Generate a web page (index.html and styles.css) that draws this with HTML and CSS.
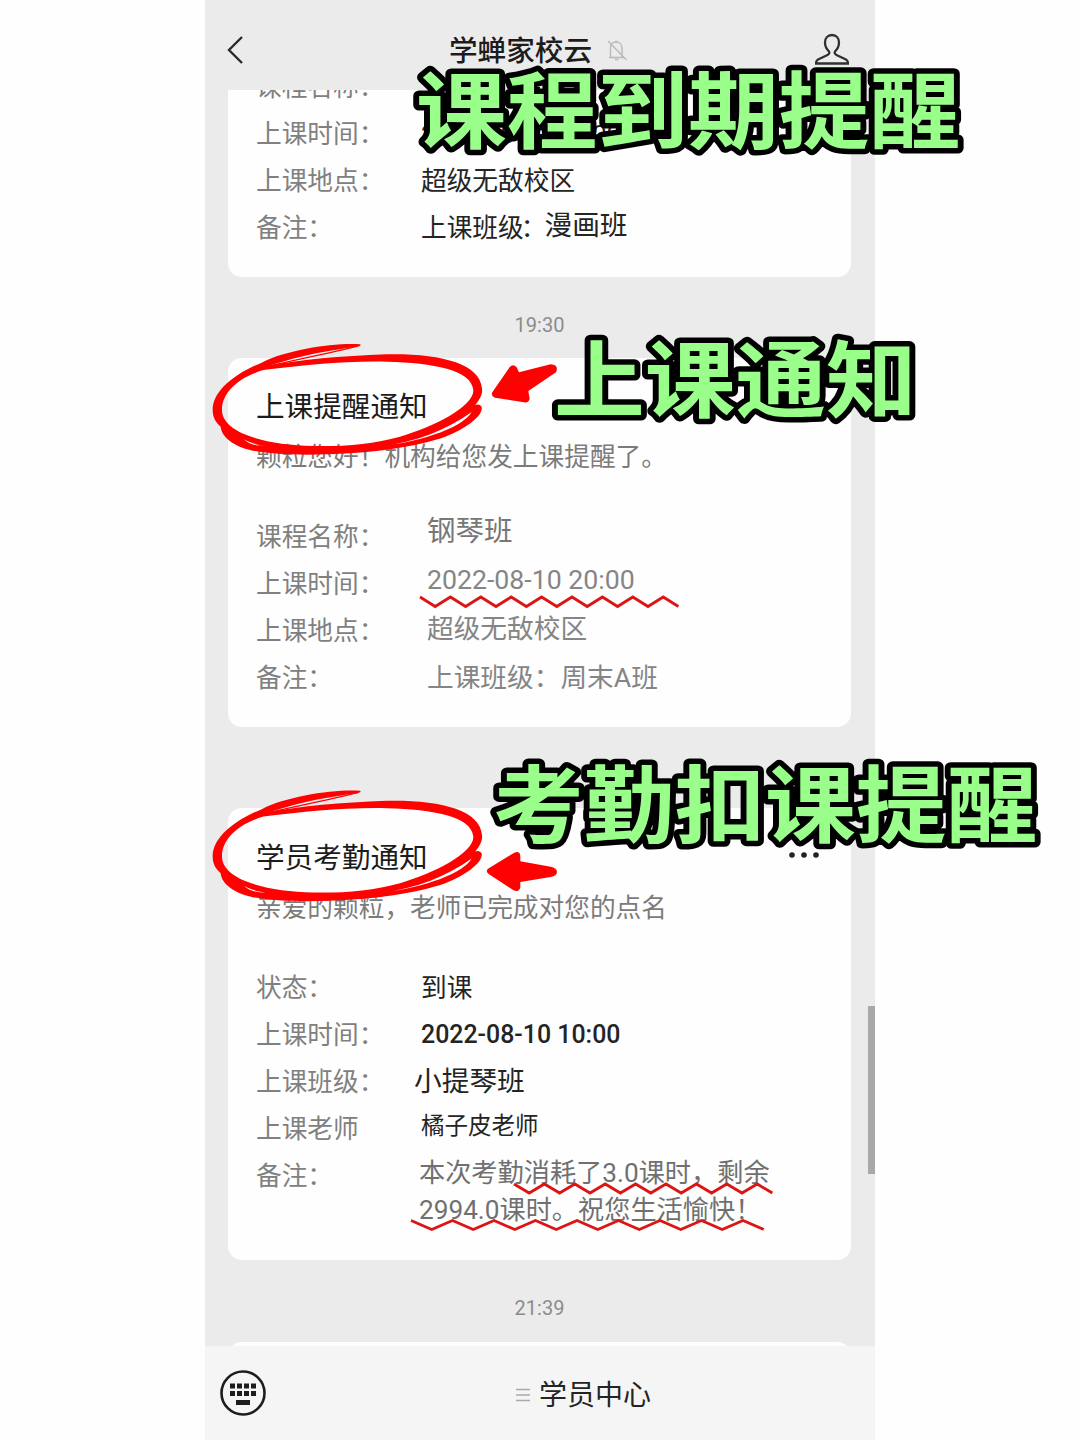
FILE: index.html
```html
<!DOCTYPE html>
<html lang="zh-CN">
<head>
<meta charset="utf-8">
<title>学蝉家校云</title>
<link rel="stylesheet" href="styles.css">
</head>
<body>
<main class="phone">
  <header class="topbar">
    <svg class="back" viewBox="0 0 18 30"><path d="M16 2 3 15l13 13"/></svg>
    <h1 class="topbar-title">学蝉家校云</h1>
    <svg class="bell" viewBox="0 0 22 24"><path d="M3 19.500h15M4.500 19V10c0-4 2.500-6 5.500-6s6 2 6 6v9M9 3.500h2.500M9 21.500h3.500M2 3l18.500 19"/></svg>
    <svg class="user" viewBox="0 0 34 34"><path d="M17 2c-4.500 0-7 3.500-7 7.500 0 4 2 7 4 9 1 2-.5 3-2.500 4L3 26.500c-1.500.8-2 2-2 4h32c0-2-.5-3.200-2-4l-8.500-4c-2-1-3.500-2-2.500-4 2-2 4-5 4-9C24 5.500 21.500 2 17 2Z"/></svg>
  </header>

  <section class="feed">
    <article class="card card-first">
      <div class="labels">
        <span>课程名称：</span><span>上课时间：</span><span>上课地点：</span><span>备注：</span>
      </div>
      <div class="values">
        <span>&nbsp;</span><span>2022-08-10 10:00</span><span>超级无敌校区</span>
        <span class="remark">上课班级<i>：</i><b>漫画班</b></span>
      </div>
    </article>

    <time class="stamp stamp-first">19:30</time>

    <article class="card card-class">
      <h2 class="card-title">上课提醒通知</h2>
      <p class="card-lead">颗粒您好！机构给您发上课提醒了。</p>
      <div class="details">
        <div class="labels">
          <span>课程名称：</span><span>上课时间：</span><span>上课地点：</span><span>备注：</span>
        </div>
        <div class="values values-muted">
          <span class="course">钢琴班</span><span>2022-08-10 20:00</span><span>超级无敌校区</span><span class="cut">上课班级：周末A班</span>
        </div>
      </div>
    </article>

    <article class="card card-attendance">
      <div class="title-row">
        <h2 class="card-title">学员考勤通知</h2>
        <svg class="more" viewBox="0 0 32 8"><circle cx="4" cy="4" r="2.800"/><circle cx="16" cy="4" r="2.800"/><circle cx="28" cy="4" r="2.800"/></svg>
      </div>
      <p class="card-lead">亲爱的颗粒，老师已完成对您的点名</p>
      <div class="details">
        <div class="labels">
          <span>状态：</span><span>上课时间：</span><span>上课班级：</span><span>上课老师</span><span>备注：</span>
        </div>
        <div class="values">
          <span>到课</span><span class="strong">2022-08-10 10:00</span><span class="group">小提琴班</span><span class="teacher">橘子皮老师</span>
          <p class="note">本次考勤消耗了3.0课时，剩余<br>2994.0课时。祝您生活愉快！</p>
        </div>
      </div>
    </article>

    <time class="stamp stamp-last">21:39</time>
    <div class="card next-card"></div>
    <div class="scrollbar"></div>
  </section>

  <footer class="bottombar">
    <svg class="keyboard" viewBox="0 0 48 48"><circle cx="24" cy="24" r="21.500"/><path d="M11 14.500h5v5h-5zM18 14.500h5v5h-5zM25 14.500h5v5h-5zM32 14.500h5v5h-5zM11 22h5v5h-5zM18 22h5v5h-5zM25 22h5v5h-5zM32 22h5v5h-5zM17 31h14v5H17z"/></svg>
    <div class="menu">
      <svg class="lines" viewBox="0 0 14 14"><path d="M0 1.500h14M0 7h14M0 12.500h14"/></svg>
      <span>学员中心</span>
    </div>
  </footer>
</main>

<svg class="notes" viewBox="0 0 1080 1440">
  <defs>
    <g id="loop">
      <path fill-rule="evenodd" d="M480 103C400 98 260 120 185 158C90 197 38 250 38 300C38 325 50 340 62 350C66 385 105 408 150 420C230 438 350 436 450 430C560 424 700 400 760 370C820 340 850 310 845 290Q838 281 826 285C843 265 848 250 846 235C840 160 720 130 560 133C420 138 300 150 212 166C300 136 390 120 474 110Q486 106 480 103ZM190 180C320 165 420 153 560 155C700 158 815 180 820 240C822 290 700 350 600 380C520 402 430 410 340 408C200 405 66 370 66 300C66 250 110 205 190 180ZM545 409C650 395 740 360 815 306C790 350 680 391 545 409ZM132 388C155 401 170 404 196 408C170 408 145 402 132 388Z"/>
      <path class="hair" d="M200 170C290 148 380 132 470 109"/>
    </g>
  </defs>
  <g class="red">
    <use href="#loop" transform="translate(200 310) scale(.3333)"/>
    <use href="#loop" transform="translate(200 756.500) scale(.3333)"/>
    <path transform="translate(200 310) scale(.3333)" d="M877 247L930 170Q940 160 950 172L957 187L1052 163Q1078 165 1068 187L985 243L989 266Q985 280 972 277L885 263Q872 258 877 247Z"/>
    <path transform="translate(200 740) scale(.3333)" d="M864 386L943 338Q960 332 961 348V364L1052 380Q1071 384 1071 396Q1071 408 1052 411L961 426V443Q955 458 941 451L866 402Q856 394 864 386Z"/>
  </g>
  <g class="zigzag">
    <path d="M420 597l15.200 9.500 15.200-9.500 15.200 9.500 15.200-9.500 15.200 9.500 15.200-9.500 15.200 9.500 15.200-9.500 15.200 9.500 15.200-9.500 15.200 9.500 15.200-9.500 15.200 9.500 15.200-9.500 15.200 9.500 15.200-9.500 15.200 9.500"/>
    <path d="M514 1184l15.200 9 15.200-9 15.200 9 15.200-9 15.200 9 15.200-9 15.200 9 15.200-9 15.200 9 15.200-9 15.200 9 15.200-9 15.200 9 15.200-9 15.200 9 15.200-9 15.200 9"/>
    <path d="M411 1220.500l20.750 9 20.750-9 20.750 9 20.750-9 20.750 9 20.750-9 20.750 9 20.750-9 20.750 9 20.750-9 20.750 9 20.750-9 20.750 9 20.750-9 20.750 9 20.750-9 20.750 9"/>
  </g>
  <g class="callouts">
    <text transform="translate(416 142) scale(1.08 1)">课程到期提醒</text>
    <text transform="translate(554 411) scale(1.08 1)">上课通知</text>
    <text transform="translate(493 836) scale(1.08 1)">考勤扣课提醒</text>
  </g>
</svg>
</body>
</html>
```

FILE: styles.css
```css
* { box-sizing: border-box; }

body {
  margin: 0;
  width: 1080px;
  height: 1440px;
  position: relative;
  overflow: hidden;
  background: #fefefe;
  font-family: Roboto, "Noto Sans CJK SC", sans-serif;
}

h1, h2, p { margin: 0; font-weight: 400; }

.phone {
  width: 670px;
  height: 1440px;
  margin-left: 205px;
  background: #ebebeb;
  display: flex;
  flex-direction: column;
}

.topbar {
  height: 90px;
  padding: 10px 26px 0 21px;
  display: flex;
  align-items: center;
}
.topbar svg { fill: none; }
.back { width: 18px; height: 30px; stroke: #2a2a2a; stroke-width: 2.4; }
.topbar-title {
  margin: 2px 0 0 205px;
  font-size: 28.600px;
  font-weight: 500;
  line-height: 40px;
  color: #1c1c1c;
}
.bell { width: 22px; height: 24px; margin-left: 14px; stroke: #b9b9b9; stroke-width: 1.4; }
.user { width: 34px; height: 34px; margin-left: auto; stroke: #303030; stroke-width: 2.3; }

.feed {
  position: relative;
  height: 1256px;
  padding: 0 24px 0 23px;
  overflow: hidden;
}

.card { background: #fefefe; border-radius: 14px; padding: 0 28px; }
.card-first {
  height: 187px;
  border-radius: 0 0 14px 14px;
  display: flex;
  align-items: flex-start;
  overflow: hidden;
}
.card-first .labels, .card-first .values { margin-top: -26px; }
.card-class { height: 369px; padding-top: 28px; }
.card-attendance { height: 452px; margin-top: 81px; padding-top: 29px; }

.labels, .values { display: flex; flex-direction: column; font-size: 25.700px; }
.labels { width: 165px; color: #808080; }
.labels span, .values span { height: 47px; line-height: 47px; white-space: nowrap; }
.remark i { font-style: normal; margin-left: -3px; }
.values { color: #242424; }
.details { display: flex; align-items: flex-start; }

.remark { display: flex; }
.remark b { margin: -3px 0 0 -2px; font-size: 27.700px; font-weight: 400; }

.stamp { display: block; text-align: center; font-size: 20px; line-height: 24px; color: #8b8b8b; }
.stamp-first { margin: 36px 0 21px; }
.stamp-last { margin: 36px 0 22px; }

.card-title { font-size: 28.600px; line-height: 42px; color: #1c1c1c; }
.card-lead { margin-top: 10px; font-size: 25.700px; line-height: 38px; color: #7b7b7b; white-space: nowrap; }
.card-class .labels { margin-top: 38px; }
.card-attendance .details { margin-top: 38px; }

.labels span { letter-spacing: 0; font-feature-settings: "palt" 0; }

.values-muted { margin: 31px 0 0 6px; color: #858585; font-size: 26.700px; }
.card-class .values-muted span { height: 49px; line-height: 49px; }
.values-muted .course { font-size: 28.500px; color: #777; }
.values-muted .cut { clip-path: inset(0 0 14px 0); }

.title-row { display: flex; justify-content: space-between; align-items: center; }
.more { width: 32px; height: 8px; margin: -6px 3px 0 0; fill: #222; }

.values .strong { font-size: 24.900px; line-height: 45px; font-weight: 500; }
.values .group { margin-left: -7px; font-size: 27.700px; line-height: 45px; }
.values .teacher { font-size: 23.500px; height: 42px; line-height: 41px; }
.note { margin: 7px 0 0 -2px; font-size: 26.200px; line-height: 37px; color: #707070; white-space: nowrap; }

.next-card { height: 40px; }

.scrollbar {
  position: absolute;
  right: 0;
  top: 916px;
  width: 7px;
  height: 168px;
  background: #a8a8a8;
}

.bottombar {
  height: 94px;
  padding: 3px 14px 0;
  background: #f5f5f5;
  display: flex;
  align-items: center;
}
.keyboard { width: 48px; height: 48px; margin-top: -3px; fill: #1d1d1d; }
.keyboard circle { fill: none; stroke: #1d1d1d; stroke-width: 2.6; }
.menu {
  margin-left: 249px;
  display: flex;
  align-items: center;
  gap: 9px;
  font-size: 28px;
  line-height: 40px;
  color: #242424;
}
.menu span { margin-top: 2px; }
.lines { width: 14px; height: 14px; stroke: #aaa; stroke-width: 1.5; }

/* Hand-drawn marks and callouts laid over the phone screen */
.notes { position: absolute; left: 0; top: 0; width: 1080px; height: 1440px; }
.red { fill: #fe0202; }
.hair { fill: none; stroke: #fe0202; stroke-width: 4; }
.zigzag { fill: none; stroke: #dc1414; stroke-width: 2.8; }
.callouts {
  font-family: "Noto Sans CJK SC", sans-serif;
  font-size: 84px;
  font-weight: 700;
  fill: #99ff8a;
  stroke: #000;
  stroke-width: 11px;
  stroke-linejoin: round;
  paint-order: stroke fill;
}
```
